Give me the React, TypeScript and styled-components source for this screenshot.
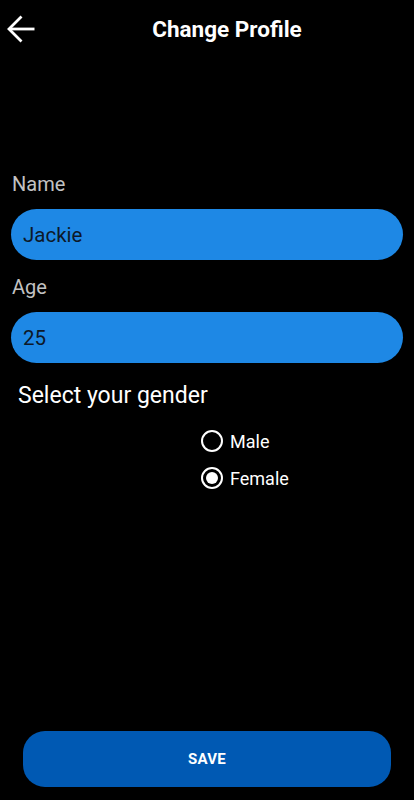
import React from 'react';
import styled, { createGlobalStyle } from 'styled-components';

const GlobalStyle = createGlobalStyle`
  html, body {
    margin: 0;
    padding: 0;
    background: #000;
  }
  * {
    box-sizing: border-box;
  }
  body {
    font-family: Roboto, "Liberation Sans", Arial, sans-serif;
  }
`;

const Screen = styled.div`
  width: 414px;
  height: 800px;
  background: #000;
  display: flex;
  flex-direction: column;
`;

const Header = styled.header`
  height: 57px;
  display: flex;
  align-items: center;
  padding: 0 7px;
`;

const BackButton = styled.button`
  background: none;
  border: none;
  padding: 0;
  width: 28px;
  height: 28px;
  display: flex;
  align-items: center;
  justify-content: center;
  color: #fff;
`;

const Title = styled.h1`
  flex: 1;
  margin: 0 0 0 -28px;
  padding-left: 40px;
  text-align: center;
  color: #fff;
  font-size: 22.5px;
  line-height: 28px;
  font-weight: 700;
`;

const Form = styled.form`
  display: flex;
  flex-direction: column;
  padding: 115px 11px 0 11px;
`;

const Label = styled.label`
  color: #c2c2c2;
  font-size: 20px;
  line-height: 25px;
  padding-left: 1px;
  margin-bottom: 12px;
`;

const Input = styled.input`
  height: 51px;
  border: none;
  border-radius: 26px;
  background: #1e88e5;
  color: #0d1828;
  font-family: inherit;
  font-size: 20.5px;
  padding: 0 12px;
  margin-bottom: 15px;
  outline: none;
`;

const GenderTitle = styled.div`
  color: #fff;
  font-size: 23px;
  line-height: 26px;
  padding-left: 7px;
  margin-top: 5px;
`;

const RadioGroup = styled.div`
  display: flex;
  flex-direction: column;
  gap: 15px;
  padding-left: 190px;
  margin-top: 21px;
`;

const RadioRow = styled.label`
  display: flex;
  align-items: center;
  gap: 7px;
  color: #fff;
  font-size: 18px;
`;

const RadioCircle = styled.span<{ checked: boolean }>`
  width: 22px;
  height: 22px;
  border-radius: 50%;
  border: 2px solid #fff;
  display: flex;
  align-items: center;
  justify-content: center;

  &::after {
    content: '';
    width: 12px;
    height: 12px;
    border-radius: 50%;
    background: #fff;
    display: ${({ checked }) => (checked ? 'block' : 'none')};
  }
`;

const SaveButton = styled.button`
  margin: auto 23px 13px 23px;
  height: 56px;
  border: none;
  border-radius: 22px;
  background: #0059b3;
  color: #fff;
  font-family: inherit;
  font-size: 15px;
  font-weight: 700;
  letter-spacing: 0.3px;
`;

const App: React.FC = () => {
  const genders = [
    { label: 'Male', checked: false },
    { label: 'Female', checked: true },
  ];

  return (
    <>
      <GlobalStyle />
      <Screen>
        <Header>
          <BackButton aria-label="Back">
            <svg width="28" height="28" viewBox="0 0 28 28" fill="none" stroke="#fff" strokeWidth="2.8">
              <path d="M27.5 14H2" />
              <path d="M14.5 1.5L2 14l12.5 12.5" />
            </svg>
          </BackButton>
          <Title>Change Profile</Title>
        </Header>

        <Form>
          <Label>Name</Label>
          <Input defaultValue="Jackie" />
          <Label>Age</Label>
          <Input defaultValue="25" />
          <GenderTitle>Select your gender</GenderTitle>
          <RadioGroup>
            {genders.map((g) => (
              <RadioRow key={g.label}>
                <RadioCircle checked={g.checked} />
                {g.label}
              </RadioRow>
            ))}
          </RadioGroup>
        </Form>

        <SaveButton>SAVE</SaveButton>
      </Screen>
    </>
  );
};

export default App;
